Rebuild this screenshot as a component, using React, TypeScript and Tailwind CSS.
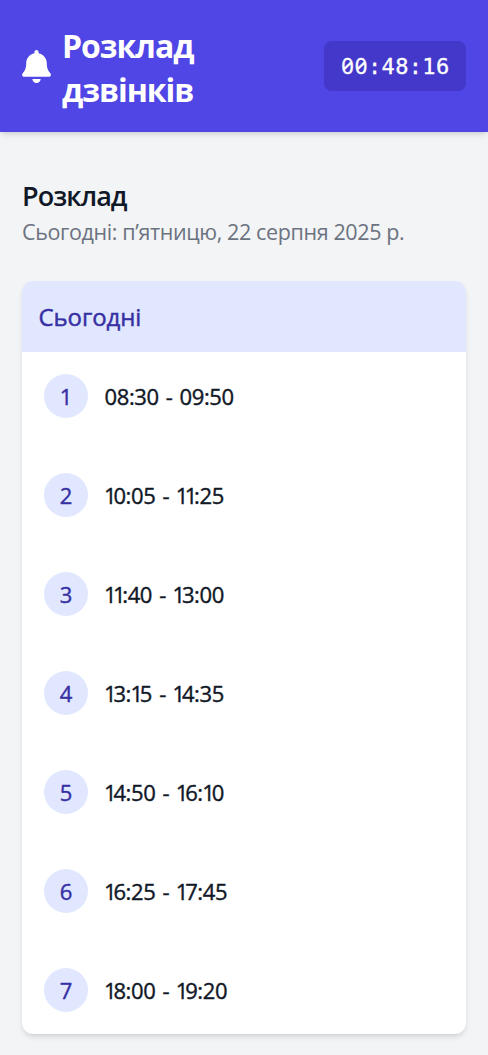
import { FaBell } from "react-icons/fa6";

const lessons = [
  "08:30 - 09:50",
  "10:05 - 11:25",
  "11:40 - 13:00",
  "13:15 - 14:35",
  "14:50 - 16:10",
  "16:25 - 17:45",
  "18:00 - 19:20",
];

function Clock({ time }: { time: string }) {
  return (
    <div className="flex h-[50px] w-[142px] items-center justify-center rounded-lg bg-[#4338ca] text-[22px] [-webkit-text-stroke:0.3px]">
      {time.split("").map((char, i) => (
        <span
          key={i}
          className={
            char === "0"
              ? "w-[13.6px] -translate-y-px text-center font-['Noto_Sans',sans-serif] slashed-zero"
              : "w-[13.6px] text-center font-['DejaVu_Sans_Mono',monospace]"
          }
        >
          {char}
        </span>
      ))}
    </div>
  );
}

function Lesson({ index, time }: { index: number; time: string }) {
  return (
    <li className="flex h-11 items-center gap-4 [-webkit-text-stroke:0.4px]">
      <span className="flex size-11 items-center justify-center rounded-full bg-[#e0e7ff] text-[22px] text-[#3730a3]">
        {index}
      </span>
      <span className="pl-[0.5px] text-[22px] tracking-[-0.4px] whitespace-pre text-[#111827] [word-spacing:1.8px]">
        {time.split("").map((char, i) =>
          char === "1" ? (
            <span key={i} className="-ml-[0.5px] tracking-[-3.2px]">
              1
            </span>
          ) : (
            char
          ),
        )}
      </span>
    </li>
  );
}

export default function App() {
  return (
    <div className="min-h-[1055px] bg-[#f3f4f6] font-['Open_Sans','Noto_Sans',sans-serif]">
      <header className="flex h-[132px] items-center justify-between bg-[#4f46e5] px-[22px] text-white shadow-md">
        <div className="flex items-center gap-[11px]">
          <FaBell className="h-[33px] w-[29px]" />
          <h1 className="w-[150px] pt-1 text-[32px] leading-[44px] font-bold tracking-[-1.05px]">Розклад дзвінків</h1>
        </div>
        <Clock time="00:48:16" />
      </header>
      <main className="px-[22px] pt-11">
        <h2 className="h-[39px] text-[27px] leading-[39px] font-semibold tracking-[-0.95px] text-[#111827]">Розклад</h2>
        <p className="h-[33px] text-[21.5px] leading-[33px] tracking-[-0.38px] whitespace-nowrap text-[#6b7280]">
          Сьогодні: п’ятницю, 22 серпня 2025 р.
        </p>
        <section className="mt-[33px] overflow-hidden rounded-[11px] bg-white shadow-md">
          <h3 className="flex h-[71px] items-center bg-[#e0e7ff] px-[16.5px] text-[24px] tracking-[-0.1px] text-[#3730a3] [-webkit-text-stroke:0.45px]">
            Сьогодні
          </h3>
          <ul className="flex flex-col gap-[55px] p-[22px]">
            {lessons.map((time, i) => (
              <Lesson key={time} index={i + 1} time={time} />
            ))}
          </ul>
        </section>
      </main>
    </div>
  );
}
